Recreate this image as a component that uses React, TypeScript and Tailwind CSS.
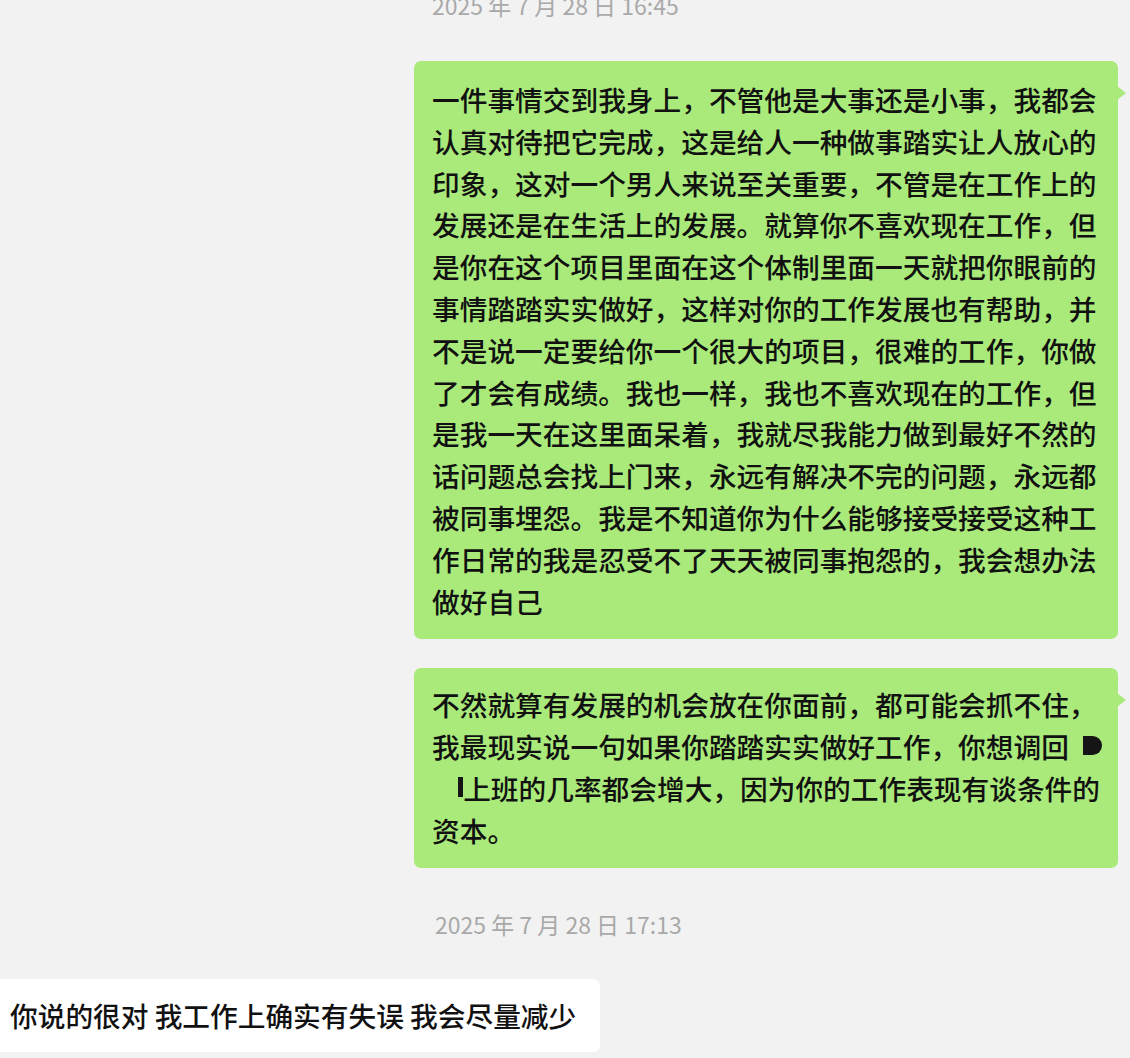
const FONT = '"Noto Sans CJK SC", "Noto Sans", sans-serif';

const bubble1 = [
  "一件事情交到我身上，不管他是大事还是小事，我都会",
  "认真对待把它完成，这是给人一种做事踏实让人放心的",
  "印象，这对一个男人来说至关重要，不管是在工作上的",
  "发展还是在生活上的发展。就算你不喜欢现在工作，但",
  "是你在这个项目里面在这个体制里面一天就把你眼前的",
  "事情踏踏实实做好，这样对你的工作发展也有帮助，并",
  "不是说一定要给你一个很大的项目，很难的工作，你做",
  "了才会有成绩。我也一样，我也不喜欢现在的工作，但",
  "是我一天在这里面呆着，我就尽我能力做到最好不然的",
  "话问题总会找上门来，永远有解决不完的问题，永远都",
  "被同事埋怨。我是不知道你为什么能够接受接受这种工",
  "作日常的我是忍受不了天天被同事抱怨的，我会想办法",
  "做好自己",
];

function Tail() {
  return (
    <svg
      className="absolute right-[-9px] top-[25px]"
      width="10"
      height="14"
      viewBox="0 0 10 14"
    >
      <path d="M0 0 L9 7 L0 14 Z" fill="#a9ea7a" />
    </svg>
  );
}

function Timestamp({ text, className }: { text: string; className?: string }) {
  return (
    <div
      className={`text-[23px] font-normal leading-[30px] text-[#a9a9a9] ${className ?? ""}`}
      style={{ fontFamily: FONT }}
    >
      {text}
    </div>
  );
}

export default function App() {
  return (
    <div
      className="h-[1058px] w-[1130px] overflow-hidden bg-[#f2f2f2] font-medium text-[#111111]"
      style={{ fontFamily: FONT }}
    >
      <Timestamp text="2025 年 7 月 28 日 16:45" className="mt-[-10px] pl-[432px]" />

      <div className="mt-[41px] flex justify-end pr-[12px]">
        <div className="relative w-[704px] rounded-[7px] bg-[#a9ea7a] px-[18px] pt-[18px] pb-[17px] text-[27.7px] leading-[41.8px]">
          <Tail />
          {bubble1.map((line) => (
            <div key={line} className="whitespace-nowrap">
              {line}
            </div>
          ))}
        </div>
      </div>

      <div className="mt-[29px] flex justify-end pr-[12px]">
        <div className="relative w-[704px] rounded-[7px] bg-[#a9ea7a] px-[18px] pt-[16px] pb-[16px] text-[27.7px] leading-[41.8px]">
          <Tail />
          <div className="whitespace-nowrap">
            不然就算有发展的机会放在你面前，都可能会抓不住，
          </div>
          <div className="flex items-center justify-between whitespace-nowrap">
            <span>我最现实说一句如果你踏踏实实做好工作，你想调回</span>
            <span className="mr-[-2px] mt-[-4px] h-[19px] w-[19px] rounded-r-full rounded-l-[2px] bg-[#151515]" />
          </div>
          <div className="flex items-center whitespace-nowrap">
            <span className="flex h-[24px] w-[36px] justify-end">
              <span className="h-[20px] w-[5px] bg-[#151515]" />
            </span>
            <span>上班的几率都会增大，因为你的工作表现有谈条件的</span>
          </div>
          <div className="whitespace-nowrap">资本。</div>
        </div>
      </div>

      <Timestamp text="2025 年 7 月 28 日 17:13" className="mt-[41px] pl-[435px]" />

      <div className="mt-[40px] flex">
        <div className="ml-[-8px] rounded-[7px] bg-white py-[16px] pl-[18px] pr-[24px] text-[27.7px] leading-[41.8px] whitespace-nowrap">
          你说的很对 我工作上确实有失误 我会尽量减少
        </div>
      </div>
    </div>
  );
}
